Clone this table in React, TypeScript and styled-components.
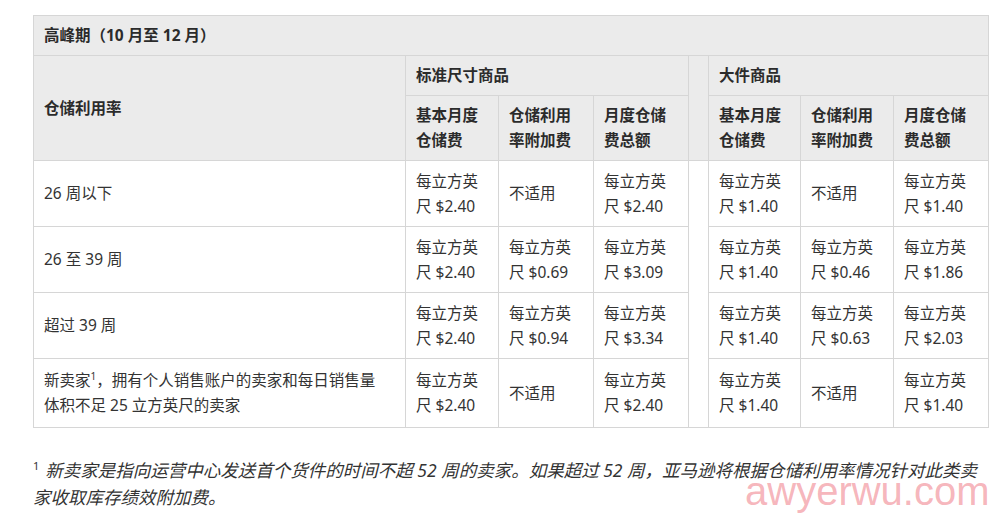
import React from 'react'
import styled, { createGlobalStyle } from 'styled-components'

const GlobalStyle = createGlobalStyle`
  html, body {
    margin: 0;
    padding: 0;
    background: #ffffff;
  }
  body {
    font-family: "Noto Sans", "Noto Sans CJK SC", sans-serif;
    color: #333333;
  }
`

const Page = styled.div`
  position: relative;
  width: 1000px;
  height: 521px;
  padding: 15px 0 0 33px;
  box-sizing: border-box;
  overflow: hidden;
`

const Table = styled.table`
  border-collapse: collapse;
  table-layout: fixed;
  width: 955px;
  font-size: 15.5px;
  line-height: 25px;
`

interface IRowProps {
  readonly tall?: boolean
}

const Row = styled.tr<IRowProps>`
  height: ${props => (props.tall ? '69px' : '66px')};
`

interface ICellProps {
  readonly head?: boolean
  readonly gap?: boolean
}

const Cell = styled.td<ICellProps>`
  border: 1px solid #d6d6d6;
  padding: ${props => (props.head ? '7px 10px' : '0 10px')};
  vertical-align: middle;
  text-align: left;
  background: ${props => (props.head ? '#ebebeb' : '#ffffff')};
  font-weight: ${props => (props.head ? 700 : 400)};
  color: ${props => (props.head ? '#2b2b2b' : '#333333')};
  white-space: nowrap;
  ${props => props.gap && 'padding: 0;'}
`

const TitleCell = styled(Cell)`
  height: 40px;
  padding: 0 10px;
  box-sizing: border-box;
`

const Sup = styled.sup`
  font-size: 10px;
  line-height: 0;
  vertical-align: 6px;
`

const Footnote = styled.p`
  margin: 29px 0 0 0;
  width: 965px;
  font-size: 17.5px;
  line-height: 27px;
  font-style: italic;
  color: #333333;
  white-space: nowrap;
`

const FootSup = styled.span`
  font-style: normal;
  font-size: 11px;
  vertical-align: 7px;
  line-height: 0;
  margin-right: 6px;
`

const Watermark = styled.div`
  position: absolute;
  left: 745px;
  top: 469px;
  font-family: "Liberation Sans", sans-serif;
  font-size: 40px;
  line-height: 44px;
  color: rgba(242, 140, 150, 0.65);
  pointer-events: none;
`

const widths = [372, 93, 95, 95, 20, 92, 93, 95]

const subHeads = [
  ['基本月度', '仓储费'],
  ['仓储利用', '率附加费'],
  ['月度仓储', '费总额'],
]

const rows = [
  {
    label: <>26 周以下</>,
    std: ['$2.40', null, '$2.40'],
    big: ['$1.40', null, '$1.40'],
  },
  {
    label: <>26 至 39 周</>,
    std: ['$2.40', '$0.69', '$3.09'],
    big: ['$1.40', '$0.46', '$1.86'],
  },
  {
    label: <>超过 39 周</>,
    std: ['$2.40', '$0.94', '$3.34'],
    big: ['$1.40', '$0.63', '$2.03'],
  },
  {
    label: (
      <>
        新卖家<Sup>1</Sup>，拥有个人销售账户的卖家和每日销售量
        <br />
        体积不足 25 立方英尺的卖家
      </>
    ),
    std: ['$2.40', null, '$2.40'],
    big: ['$1.40', null, '$1.40'],
  },
]

const Price = ({ value }: { value: string | null }) =>
  value ? (
    <Cell>
      每立方英
      <br />尺 {value}
    </Cell>
  ) : (
    <Cell>不适用</Cell>
  )

const SubHead = ({ lines }: { lines: string[] }) => (
  <Cell head>
    {lines[0]}
    <br />
    {lines[1]}
  </Cell>
)

export default function App() {
  return (
    <Page>
      <GlobalStyle />
      <Table>
        <colgroup>
          {widths.map((w, i) => (
            <col key={i} style={{ width: w }} />
          ))}
        </colgroup>
        <tbody>
          <tr>
            <TitleCell head colSpan={8}>
              高峰期（10 月至 12 月）
            </TitleCell>
          </tr>
          <tr>
            <Cell head rowSpan={2}>
              仓储利用率
            </Cell>
            <Cell head colSpan={3}>
              标准尺寸商品
            </Cell>
            <Cell head gap rowSpan={2} />
            <Cell head colSpan={3}>
              大件商品
            </Cell>
          </tr>
          <tr>
            {subHeads.map((h, i) => (
              <SubHead key={'s' + i} lines={h} />
            ))}
            {subHeads.map((h, i) => (
              <SubHead key={'b' + i} lines={h} />
            ))}
          </tr>
          {rows.map((r, i) => (
            <Row key={i} tall={i === rows.length - 1}>
              <Cell>{r.label}</Cell>
              {r.std.map((v, j) => (
                <Price key={'s' + j} value={v} />
              ))}
              {i === 0 && <Cell gap rowSpan={rows.length} />}
              {r.big.map((v, j) => (
                <Price key={'b' + j} value={v} />
              ))}
            </Row>
          ))}
        </tbody>
      </Table>
      <Footnote>
        <FootSup>1</FootSup>
        新卖家是指向运营中心发送首个货件的时间不超 52 周的卖家。如果超过 52 周，亚马逊将根据仓储利用率情况针对此类卖
        <br />
        家收取库存绩效附加费。
      </Footnote>
      <Watermark>awyerwu.com</Watermark>
    </Page>
  )
}
